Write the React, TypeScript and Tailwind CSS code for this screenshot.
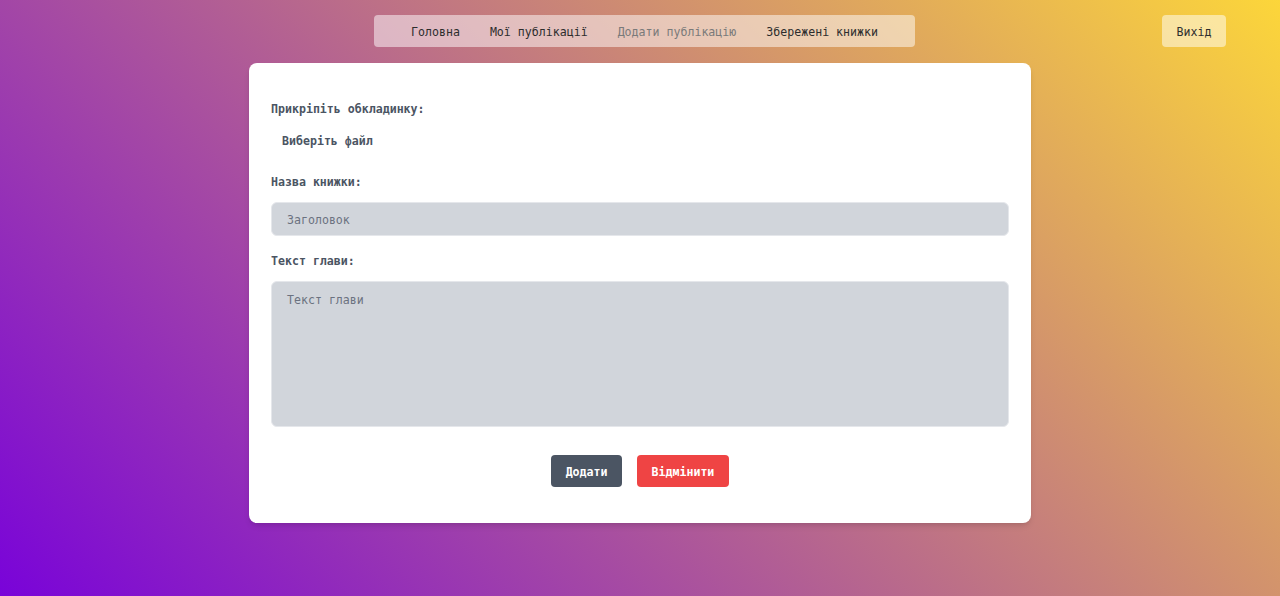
import React from 'react';

const mono = "font-['DejaVu_Sans_Mono','Liberation_Mono',monospace] text-[11.6px]";

const navItems = [
  { label: 'Головна', active: false },
  { label: 'Мої публікації', active: false },
  { label: 'Додати публікацію', active: true },
  { label: 'Збережені книжки', active: false },
];

const App = () => {
  return (
    <div className={`min-h-[596px] w-full bg-[linear-gradient(45deg,#7903d9,#fcd63a)] pt-[15px] pb-[73px] ${mono}`}>
      {/* header */}
      <header className="grid grid-cols-[1fr_auto_1fr] items-center">
        <div />
        <nav className="ml-[9px] flex h-8 items-center gap-[30px] rounded-sm bg-white/50 px-[37px] pt-[3px]">
          {navItems.map((item) => (
            <a
              key={item.label}
              href="#"
              className={item.active ? 'text-[#7a7a7a]' : 'text-[#2d2d2d]'}
            >
              {item.label}
            </a>
          ))}
        </nav>
        <div className="flex justify-end pr-[54px]">
          <button className="flex h-8 items-center rounded-sm bg-white/50 px-[14.5px] pt-[3px] text-[#2d2d2d]">Вихід</button>
        </div>
      </header>

      {/* form card */}
      <main className="mx-auto mt-4 w-[782px] rounded-lg bg-white px-[22px] pt-[38px] pb-[36px] shadow-md">
        <label className="block leading-4 font-bold text-[#4b5563]">Прикріпіть обкладинку:</label>
        <div className="mt-[9px] flex h-8 items-center">
          <span className="px-[11px] font-bold text-[#4b5563]">Виберіть файл</span>
        </div>

        <label className="mt-4 block leading-4 font-bold text-[#4b5563]">Назва книжки:</label>
        <input
          type="text"
          placeholder="Заголовок"
          className="mt-[12px] block h-[34px] w-full rounded-md border border-[#e5e7eb] bg-[#d1d5db] pl-[15px] pr-4 pt-[2px] text-gray-700 placeholder:text-[#6b7280] outline-none"
        />

        <label className="mt-[17px] block leading-4 font-bold text-[#4b5563]">Текст глави:</label>
        <textarea
          placeholder="Текст глави"
          className="mt-[12px] block h-[146px] w-full resize-none rounded-md border border-[#e5e7eb] bg-[#d1d5db] pl-[15px] pr-4 pt-[10px] leading-4 text-gray-700 placeholder:text-[#6b7280] outline-none"
        />

        <div className="mt-7 flex justify-center gap-[15px]">
          <button className="flex h-8 items-center rounded bg-[#4b5563] px-[14.5px] pt-[3px] font-bold text-white">Додати</button>
          <button className="flex h-8 items-center rounded bg-[#ef4444] px-[14.5px] pt-[3px] font-bold text-white">Відмінити</button>
        </div>
      </main>
    </div>
  );
};

export default App;
